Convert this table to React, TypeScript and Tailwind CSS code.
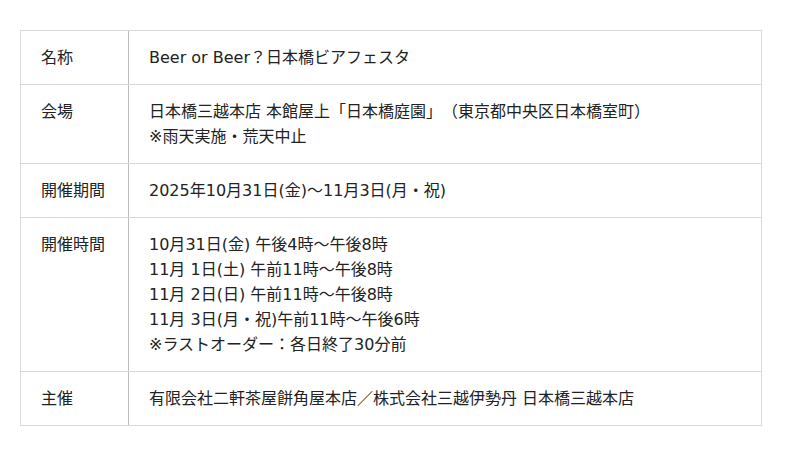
const rows: { label: string; lines: string[] }[] = [
  { label: "名称", lines: ["Beer or Beer？日本橋ビアフェスタ"] },
  {
    label: "会場",
    lines: ["日本橋三越本店 本館屋上「日本橋庭園」（東京都中央区日本橋室町）", "※雨天実施・荒天中止"],
  },
  { label: "開催期間", lines: ["2025年10月31日(金)～11月3日(月・祝)"] },
  {
    label: "開催時間",
    lines: [
      "10月31日(金) 午後4時～午後8時",
      "11月 1日(土) 午前11時～午後8時",
      "11月 2日(日) 午前11時～午後8時",
      "11月 3日(月・祝)午前11時～午後6時",
      "※ラストオーダー：各日終了30分前",
    ],
  },
  { label: "主催", lines: ["有限会社二軒茶屋餅角屋本店／株式会社三越伊勢丹 日本橋三越本店"] },
];

// latin and japanese runs are set as separate spans
const CJK = /([\u203b\u3000-\u30ff\u4e00-\u9fff\uff00-\uffef]+)/;

function Runs({ text }: { text: string }) {
  return (
    <>
      {text
        .split(CJK)
        .filter(Boolean)
        .map((part, i) => (
          <span key={i}>{part}</span>
        ))}
    </>
  );
}

export default function App() {
  return (
    <div
      className="w-[800px] h-[456px] bg-white pt-[30px] pl-[20px] text-[16px] leading-[25px] text-[#222] [text-spacing-trim:space-all]"
      style={{ fontFamily: '"DejaVu Sans", "Noto Sans CJK JP", sans-serif' }}
    >
      {/* Outline table */}
      <div className="w-[742px] border border-[#d9d9d9] border-b-0">
        {rows.map((row) => (
          <div key={row.label} className="grid grid-cols-[108px_1fr] border-b border-[#d9d9d9]">
            <div className="px-[20px] py-[14px] border-r border-[#bdbdbd]">
              <div className="h-[25px] whitespace-nowrap">
                <Runs text={row.label} />
              </div>
            </div>
            <div className="px-[20px] py-[14px]">
              {row.lines.map((line) => (
                <div key={line} className="h-[25px] whitespace-nowrap">
                  <Runs text={line} />
                </div>
              ))}
            </div>
          </div>
        ))}
      </div>
    </div>
  );
}
